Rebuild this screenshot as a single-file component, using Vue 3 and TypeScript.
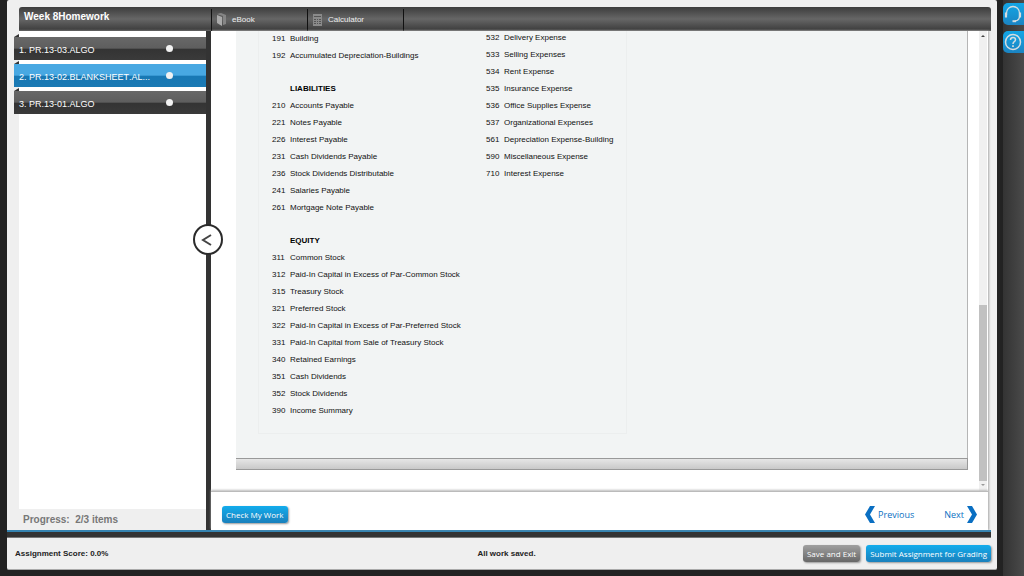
<script setup lang="ts">
import { ref } from 'vue'

interface Row {
  code?: string
  name?: string
  kind?: 'heading' | 'gap'
}

const assignments = ref<string[]>(['1. PR.13-03.ALGO', '2. PR.13-02.BLANKSHEET.AL...', '3. PR.13-01.ALGO'])
const current = ref(1)
const collapsed = ref(false)

const toRow = (line: string): Row => ({ code: line.slice(0, 3), name: line.slice(4) })

const balanceSheet: Row[] = [
  ...['191 Building', '192 Accumulated Depreciation-Buildings'].map(toRow),
  { kind: 'gap' },
  { kind: 'heading', name: 'LIABILITIES' },
  ...[
    '210 Accounts Payable',
    '221 Notes Payable',
    '226 Interest Payable',
    '231 Cash Dividends Payable',
    '236 Stock Dividends Distributable',
    '241 Salaries Payable',
    '261 Mortgage Note Payable',
  ].map(toRow),
  { kind: 'gap' },
  { kind: 'heading', name: 'EQUITY' },
  ...[
    '311 Common Stock',
    '312 Paid-In Capital in Excess of Par-Common Stock',
    '315 Treasury Stock',
    '321 Preferred Stock',
    '322 Paid-In Capital in Excess of Par-Preferred Stock',
    '331 Paid-In Capital from Sale of Treasury Stock',
    '340 Retained Earnings',
    '351 Cash Dividends',
    '352 Stock Dividends',
    '390 Income Summary',
  ].map(toRow),
]

const expenses: Row[] = [
  '532 Delivery Expense',
  '533 Selling Expenses',
  '534 Rent Expense',
  '535 Insurance Expense',
  '536 Office Supplies Expense',
  '537 Organizational Expenses',
  '561 Depreciation Expense-Building',
  '590 Miscellaneous Expense',
  '710 Interest Expense',
].map(toRow)

const columns = [balanceSheet, expenses]
</script>

<template>
  <div class="desk">
    <div class="window">
      <header class="topbar">
        <h1>Week 8Homework</h1>
        <nav class="tools">
          <button type="button">
            <svg width="10" height="13" viewBox="0 0 10 13">
              <path d="M0 2 L5 4 V13 L0 10 Z" fill="#aaa" />
              <path d="M0 1 L4 0 L9 2 V11 L6 12 V3 Z" fill="#858585" />
            </svg>
            eBook
          </button>
          <button type="button">
            <svg width="10" height="12" viewBox="0 0 10 12">
              <path d="M0 0 H9 V12 H0 Z" fill="#8a8a8a" />
              <path d="M1 2 H8 V3 H1 Z M1 5 H3 V6 H1 Z M4 5 H5 V6 H4 Z M6 5 H8 V6 H6 Z M1 7 H3 V8 H1 Z M4 7 H5 V8 H4 Z M6 7 H8 V8 H6 Z M1 9 H3 V10 H1 Z M4 9 H5 V10 H4 Z M6 9 H8 V10 H6 Z" fill="#555" />
            </svg>
            Calculator
          </button>
        </nav>
      </header>

      <div class="body">
        <aside v-show="!collapsed" class="sidebar">
          <div class="list">
            <button
              v-for="(item, i) in assignments"
              :key="item"
              type="button"
              class="item"
              :class="{ active: i === current }"
              @click="current = i"
            >
              <span class="label">{{ item }}</span>
              <span class="dot"></span>
            </button>
          </div>
          <p class="progress">Progress:&nbsp; 2/3 items</p>
        </aside>

        <div class="divider">
          <button type="button" class="toggle" aria-label="Toggle assignment list" @click="collapsed = !collapsed">
            <svg width="12" height="14" viewBox="0 0 12 14">
              <path d="M10 2 L2 7 L10 12" fill="none" stroke="#444" stroke-width="2" />
            </svg>
          </button>
        </div>

        <main class="main">
          <div class="viewport">
            <div class="page">
              <div class="sheet">
                <div class="accounts">
                  <table v-for="(rows, c) in columns" :key="c">
                    <tbody>
                      <tr v-for="(row, r) in rows" :key="r" :class="row.kind">
                        <td class="code">{{ row.code }}</td>
                        <th v-if="row.kind === 'heading'" scope="rowgroup">{{ row.name }}</th>
                        <td v-else>{{ row.name }}</td>
                      </tr>
                    </tbody>
                  </table>
                </div>
              </div>
              <div class="sheet-foot"></div>
            </div>
            <div class="scrollbar">
              <svg width="8" height="8" viewBox="0 0 8 8"><path d="M2 5 L4 3 L6 5 Z" fill="#444" /></svg>
              <div class="track"><div class="thumb"></div></div>
              <svg width="8" height="8" viewBox="0 0 8 8"><path d="M2 3 L4 5 L6 3 Z" fill="#999" /></svg>
            </div>
          </div>
          <div class="actions">
            <button type="button" class="btn blue">Check My Work</button>
            <nav class="pager">
              <a href="#previous">
                <svg width="10" height="17" viewBox="0 0 10 17"><path d="M5 0 H10 L5 8.500 L10 17 H5 L0 8.500 Z" /></svg>
                Previous
              </a>
              <a href="#next">
                Next
                <svg width="10" height="17" viewBox="0 0 10 17"><path d="M5 0 H0 L5 8.500 L0 17 H5 L10 8.500 Z" /></svg>
              </a>
            </nav>
          </div>
        </main>
      </div>

      <div class="rule"></div>
      <footer class="status">
        <span>Assignment Score: 0.0%</span>
        <span class="saved">All work saved.</span>
        <div class="submit">
          <button type="button" class="btn grey">Save and Exit</button>
          <button type="button" class="btn blue">Submit Assignment for Grading</button>
        </div>
      </footer>
    </div>

    <aside class="dock">
      <button type="button" aria-label="Support">
        <svg width="20" height="20" viewBox="0 0 20 20" fill="none" stroke="#d5dde0">
          <path d="M3.500 11 V9 A6.500 6.500 0 0 1 16.500 9 V12 Q16.500 16.500 12 17" stroke-width="1.300" />
          <path d="M3 8.500 V13.500 M17 8.500 V13.500" stroke-width="2.200" />
          <path d="M9.500 17.200 H13" stroke-width="2" />
        </svg>
      </button>
      <button type="button" aria-label="Help">
        <svg width="20" height="20" viewBox="0 0 20 20" fill="none" stroke="#d5dde0">
          <circle cx="10" cy="10" r="7.500" stroke-width="1.500" />
          <path d="M7.500 8 Q7.500 5.500 10 5.500 Q12.500 5.500 12.500 7.700 Q12.500 9 11 9.800 Q10 10.500 10 12" stroke-width="1.500" />
          <path d="M10 13.200 V15" stroke-width="1.700" />
        </svg>
      </button>
    </aside>
  </div>
</template>

<style>
body {
  margin: 0;
  background: #222;
}
</style>

<style scoped>
* {
  box-sizing: border-box;
}
.desk {
  display: flex;
  gap: 6px;
  height: 100vh;
  padding-left: 7px;
  overflow: hidden;
  background: #222;
  font-family: "Liberation Sans", Arial, sans-serif;
}
button {
  margin: 0;
  padding: 0;
  border: 0;
  font: inherit;
  cursor: pointer;
}
svg {
  display: block;
  flex: none;
}
.window {
  flex: 1;
  min-width: 0;
  display: flex;
  flex-direction: column;
  margin-bottom: 6px;
  padding-top: 7px;
  background: #efefef;
  border-bottom: 1px solid #aaa;
  border-radius: 2px;
}
.topbar {
  display: flex;
  flex: none;
  height: 24px;
  margin: 0 6px 0 12px;
  border-radius: 3px 3px 0 0;
  background: linear-gradient(#3c3c3c, #666 50%, #414141 92%, #686868);
  color: #fff;
}
h1 {
  width: 192px;
  margin: 0;
  padding-left: 5px;
  font-size: 10px;
  line-height: 20px;
}
.tools {
  display: flex;
  padding-top: 2px;
}
.tools button {
  display: flex;
  align-items: center;
  gap: 5px;
  width: 96px;
  padding: 0 0 1px 5px;
  border-left: 1px solid #111;
  background: none;
  color: #eee;
  font-size: 8px;
}
.tools button:last-child {
  width: 97px;
  border-right: 1px solid #111;
}
.body {
  flex: 1;
  min-height: 0;
  display: flex;
}
.sidebar {
  flex: none;
  display: flex;
  flex-direction: column;
  width: 199px;
  padding-left: 12px;
}
.list {
  flex: 1;
  display: flex;
  flex-direction: column;
  gap: 4px;
  padding-top: 6px;
  background: #fff;
}
.item {
  position: relative;
  display: flex;
  align-items: center;
  justify-content: space-between;
  flex: none;
  height: 23px;
  margin-left: -5px;
  padding: 2px 33px 0 5px;
  background: linear-gradient(#686868 0, #5e5e5e 48%, #343434 54%, #3a3a3a);
  color: #fff;
  font-size: 9px;
  font-kerning: none;
  text-align: left;
}
.item::before {
  content: "";
  position: absolute;
  left: 0;
  top: -3px;
  border: solid transparent;
  border-width: 0 0 3px 5px;
  border-bottom-color: #333;
}
.item.active {
  background: linear-gradient(#48a8e2 0, #48a8e2 48%, #1878b4 54%, #1b7ab4);
}
.label {
  white-space: nowrap;
}
.dot {
  flex: none;
  width: 7px;
  height: 7px;
  margin-bottom: 2px;
  border-radius: 50%;
  background: #f2f2f2;
}
.progress {
  flex: none;
  margin: 0;
  padding-left: 4px;
  color: #777;
  font-size: 10px;
  font-weight: bold;
  line-height: 21px;
}
.divider {
  position: relative;
  flex: none;
  width: 5px;
  background: #333;
}
.toggle {
  position: absolute;
  left: -13px;
  top: 193px;
  display: flex;
  align-items: center;
  justify-content: center;
  width: 30px;
  height: 31px;
  padding-right: 2px;
  border: 2px solid #2b2b2b;
  border-radius: 50%;
  background: #fff;
}
.main {
  flex: 1;
  min-width: 0;
  display: flex;
  flex-direction: column;
  margin-right: 9px;
  background: #fff;
  box-shadow: 1px 0 2px #aaa;
}
.viewport {
  flex: 1;
  min-height: 0;
  display: flex;
}
.page {
  flex: 1;
  display: flex;
  flex-direction: column;
  padding: 0 11px 21px 25px;
}
.sheet {
  flex: 1;
  min-height: 0;
  overflow: hidden;
  border-right: 1px solid #b5b5b5;
  background: #f2f4f4;
}
.sheet-foot {
  flex: none;
  height: 12px;
  border: solid #999;
  border-width: 1px 1px 1px 0;
  background: linear-gradient(#e6e6e6, #c9c9c9);
}
.accounts {
  display: flex;
  align-items: flex-start;
  width: 369px;
  margin-left: 22px;
  padding: 0 0 13px 13px;
  border: solid #eceeee;
  border-width: 0 1px 1px;
}
table {
  width: 214px;
  flex: none;
  border-collapse: collapse;
  color: #111;
  font-size: 8px;
}
table:last-child {
  width: auto;
  margin-top: -1px;
}
tr {
  height: 17px;
}
tr.gap {
  height: 16px;
}
td,
th {
  padding: 0 0 2px;
  line-height: 14px;
  text-align: left;
  white-space: nowrap;
}
th {
  color: #000;
}
.code {
  width: 18px;
}
.scrollbar {
  flex: none;
  display: flex;
  flex-direction: column;
  width: 8px;
  margin-right: 1px;
  padding: 1px 0 2px;
  background: #f0f0f0;
}
.track {
  flex: 1;
  display: flex;
  align-items: flex-end;
}
.thumb {
  width: 100%;
  height: 40%;
  background: #c1c1c1;
}
.actions {
  position: relative;
  flex: none;
  display: flex;
  align-items: center;
  justify-content: space-between;
  height: 39px;
  padding: 6px 11px 0 11px;
  border-top: 1px solid #bbb;
  box-shadow: 0 -1px 2px #bbb;
}
.btn {
  height: 17px;
  border-radius: 3px;
  box-shadow: 1px 1px 2px #999;
  color: #fff;
  font-family: "Open Sans", sans-serif;
  font-size: 8px;
  line-height: 17px;
  white-space: nowrap;
}
.blue {
  padding: 0 4px;
  background: linear-gradient(#13acec, #1a80bc);
}
.grey {
  padding: 0 4px;
  background: linear-gradient(#a0a0a0, #686868);
}
.pager {
  display: flex;
  gap: 30px;
}
.pager a {
  display: flex;
  align-items: center;
  gap: 3px;
  color: #0a6fc2;
  font-family: "Open Sans", sans-serif;
  font-size: 9px;
  line-height: 17px;
  text-decoration: none;
}
.pager path {
  fill: #0a6fc2;
}
.rule {
  flex: none;
  height: 8px;
  margin-right: 6px;
  border-top: 2px solid #3583b0;
  border-bottom: 1px solid #777;
  background: #333;
}
.status {
  flex: none;
  display: grid;
  grid-template-columns: 1fr auto 1fr;
  align-items: center;
  height: 31px;
  padding: 0 6px 1px 8px;
  color: #222;
  font-size: 8px;
  font-weight: bold;
}
.saved {
  padding-left: 7px;
}
.submit {
  display: flex;
  justify-content: flex-end;
  gap: 6px;
}
.submit .btn {
  font-weight: normal;
}
.dock {
  flex: none;
  display: flex;
  flex-direction: column;
  align-items: flex-start;
  gap: 6px;
  width: 21px;
  padding-top: 3px;
  background: linear-gradient(90deg, #333, #4a4a4a);
}
.dock button {
  width: 21px;
  height: 22px;
  border-radius: 5px 0 0 5px;
  background: linear-gradient(#13a6e6, #1b84c2);
}
</style>
